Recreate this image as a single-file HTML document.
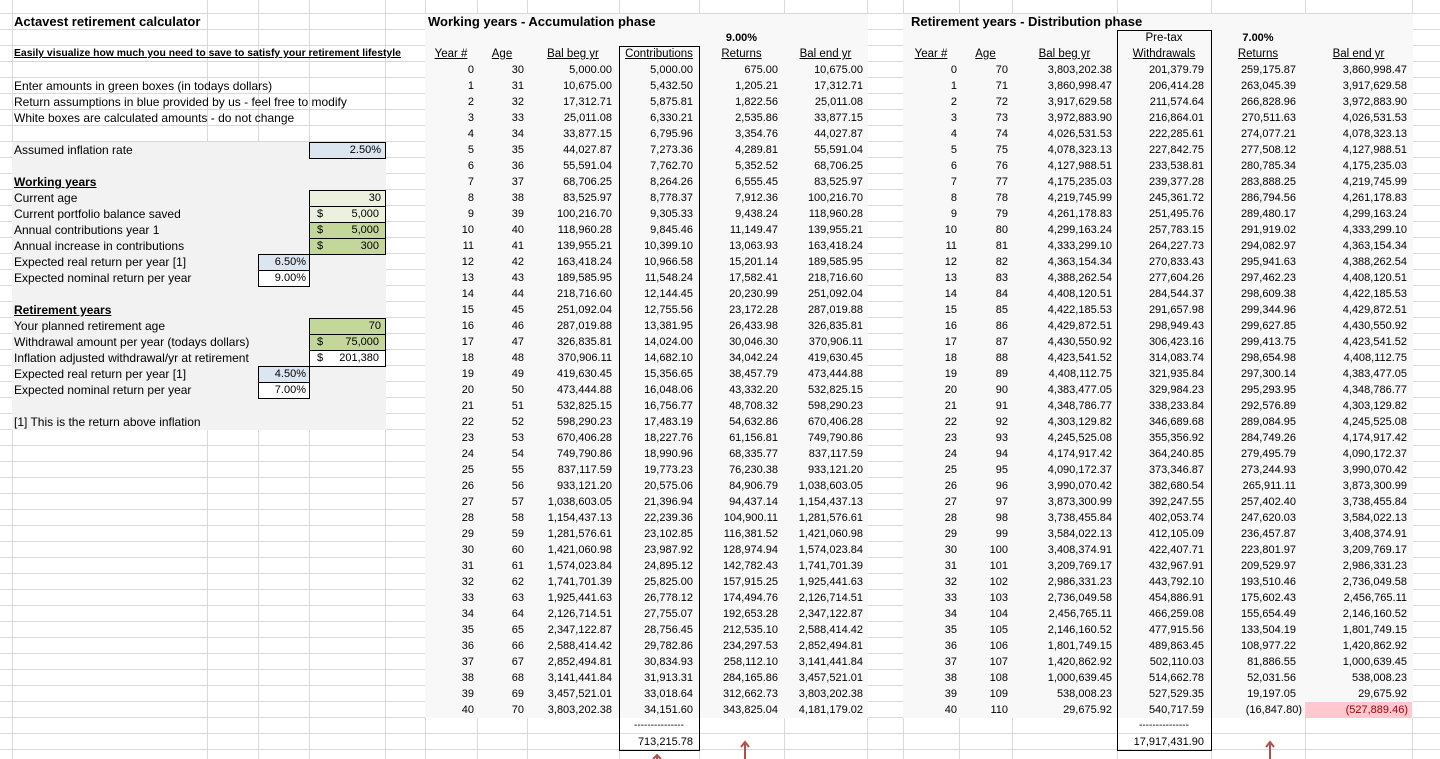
<!DOCTYPE html>
<html><head><meta charset="utf-8"><style>
*{margin:0;padding:0;box-sizing:border-box}
body{width:1440px;height:759px;overflow:hidden;background:#fff;position:relative;font-family:"Liberation Sans",sans-serif;font-size:11px;color:#000;
background-image:repeating-linear-gradient(to bottom,transparent 0,transparent 13px,#d9d9d9 13px,#d9d9d9 14px,transparent 14px,transparent 16px);}
.v{position:absolute;top:0;height:759px;width:1px;background:#d9d9d9}
.g{position:absolute}
.t{position:absolute;white-space:nowrap;line-height:16px;font-size:12px}
.n{font-size:11px}
table{position:absolute;border-collapse:collapse;table-layout:fixed}
td{height:16px;line-height:16px;padding:0;text-align:right;white-space:nowrap;overflow:visible;font-size:11px}
.hd td{text-align:center;text-decoration:underline;font-size:11.5px}
.box{position:absolute;border:1px solid #000}
u{text-decoration:underline}
.m td:nth-child(1){padding-right:3px}.m td:nth-child(2){padding-right:3px}.m td:nth-child(3){padding-right:7px}.m td:nth-child(4){padding-right:6px}.m td:nth-child(5){padding-right:6px}.m td:nth-child(6){padding-right:4px}
.r td:nth-child(1){padding-right:2px}.r td:nth-child(2){padding-right:4px}.r td:nth-child(3){padding-right:5px}.r td:nth-child(4){padding-right:7px}.r td:nth-child(5){padding-right:9px}.r td:nth-child(6){padding-right:5px}
</style></head><body>
<div class="v" style="left:12px"></div><div class="v" style="left:207px"></div><div class="v" style="left:258px"></div><div class="v" style="left:309px"></div><div class="v" style="left:385px"></div><div class="v" style="left:425px"></div><div class="v" style="left:477px"></div><div class="v" style="left:527px"></div><div class="v" style="left:619px"></div><div class="v" style="left:699px"></div><div class="v" style="left:784px"></div><div class="v" style="left:867px"></div><div class="v" style="left:903px"></div><div class="v" style="left:959px"></div><div class="v" style="left:1012px"></div><div class="v" style="left:1117px"></div><div class="v" style="left:1211px"></div><div class="v" style="left:1305px"></div><div class="v" style="left:1412px"></div>

<div class="g" style="left:12px;top:142px;width:374px;height:288px;background:#f2f2f2"></div>
<div class="g" style="left:425px;top:14px;width:443px;height:704px;background:#f8f8f8"></div>
<div class="g" style="left:903px;top:14px;width:510px;height:704px;background:#f8f8f8"></div>

<div class="t" style="left:14px;top:14px;font-weight:bold;font-size:13px">Actavest retirement calculator</div>
<div class="t" style="left:14px;top:46px;font-weight:bold;font-size:10.4px"><u>Easily visualize how much you need to save to satisfy your retirement lifestyle</u></div>
<div class="t" style="left:14px;top:78px">Enter amounts in green boxes (in todays dollars)</div>
<div class="t" style="left:14px;top:94px">Return assumptions in blue provided by us - feel free to modify</div>
<div class="t" style="left:14px;top:110px">White boxes are calculated amounts - do not change</div>
<div class="t" style="left:14px;top:142px">Assumed inflation rate</div>
<div class="t" style="left:14px;top:174px;font-weight:bold"><u>Working years</u></div>
<div class="t" style="left:14px;top:190px">Current age</div>
<div class="t" style="left:14px;top:206px">Current portfolio balance saved</div>
<div class="t" style="left:14px;top:222px">Annual contributions year 1</div>
<div class="t" style="left:14px;top:238px">Annual increase in contributions</div>
<div class="t" style="left:14px;top:254px">Expected real return per year [1]</div>
<div class="t" style="left:14px;top:270px">Expected nominal return per year</div>
<div class="t" style="left:14px;top:302px;font-weight:bold"><u>Retirement years</u></div>
<div class="t" style="left:14px;top:318px">Your planned retirement age</div>
<div class="t" style="left:14px;top:334px">Withdrawal amount per year (todays dollars)</div>
<div class="t" style="left:14px;top:350px">Inflation adjusted withdrawal/yr at retirement</div>
<div class="t" style="left:14px;top:366px">Expected real return per year [1]</div>
<div class="t" style="left:14px;top:382px">Expected nominal return per year</div>
<div class="t" style="left:14px;top:414px">[1] This is the return above inflation</div>

<div class="box n" style="left:309px;top:142px;width:77px;height:17px;background:#dce6f1;text-align:right;padding-right:4px;line-height:15px">2.50%</div>
<div class="box" style="left:309px;top:190px;width:77px;height:65px;background:#c4d79b"></div>
<div class="g" style="left:310px;top:191px;width:75px;height:31px;background:#ebf1de"></div>
<div class="t n" style="left:309px;top:190px;width:76px;text-align:right;padding-right:4px">30</div>
<div class="t n" style="left:317px;top:206px">$</div><div class="t n" style="left:309px;top:206px;width:76px;text-align:right;padding-right:6px">5,000</div>
<div class="t n" style="left:317px;top:222px">$</div><div class="t n" style="left:309px;top:222px;width:76px;text-align:right;padding-right:6px">5,000</div>
<div class="t n" style="left:317px;top:238px">$</div><div class="t n" style="left:309px;top:238px;width:76px;text-align:right;padding-right:6px">300</div>
<div class="g" style="left:309px;top:206px;width:77px;height:1px;background:#000"></div>
<div class="g" style="left:309px;top:222px;width:77px;height:1px;background:#000"></div>
<div class="g" style="left:309px;top:238px;width:77px;height:1px;background:#000"></div>
<div class="box" style="left:258px;top:254px;width:52px;height:33px;background:#fff"></div>
<div class="g" style="left:259px;top:255px;width:50px;height:15px;background:#dce6f1"></div>
<div class="g" style="left:258px;top:270px;width:52px;height:1px;background:#000"></div>
<div class="t n" style="left:258px;top:254px;width:51px;text-align:right;padding-right:3px">6.50%</div>
<div class="t n" style="left:258px;top:270px;width:51px;text-align:right;padding-right:3px">9.00%</div>

<div class="box" style="left:309px;top:318px;width:77px;height:49px;background:#fff"></div>
<div class="g" style="left:310px;top:319px;width:75px;height:31px;background:#c4d79b"></div>
<div class="g" style="left:309px;top:334px;width:77px;height:1px;background:#000"></div>
<div class="g" style="left:309px;top:350px;width:77px;height:1px;background:#000"></div>
<div class="t n" style="left:309px;top:318px;width:76px;text-align:right;padding-right:4px">70</div>
<div class="t n" style="left:317px;top:334px">$</div><div class="t n" style="left:309px;top:334px;width:76px;text-align:right;padding-right:6px">75,000</div>
<div class="t n" style="left:317px;top:350px">$</div><div class="t n" style="left:309px;top:350px;width:76px;text-align:right;padding-right:6px">201,380</div>
<div class="box" style="left:258px;top:366px;width:52px;height:33px;background:#fff"></div>
<div class="g" style="left:259px;top:367px;width:50px;height:15px;background:#dce6f1"></div>
<div class="g" style="left:258px;top:382px;width:52px;height:1px;background:#000"></div>
<div class="t n" style="left:258px;top:366px;width:51px;text-align:right;padding-right:3px">4.50%</div>
<div class="t n" style="left:258px;top:382px;width:51px;text-align:right;padding-right:3px">7.00%</div>

<div class="t" style="left:428px;top:14px;font-weight:bold;font-size:13px">Working years - Accumulation phase</div>
<div class="t n" style="left:699px;top:30px;width:85px;text-align:center;font-weight:bold">9.00%</div>
<div class="box" style="left:619px;top:46px;width:81px;height:705px"></div>
<table class="hd" style="left:425px;top:46px;width:442px"><colgroup><col style="width:52px"><col style="width:50px"><col style="width:92px"><col style="width:80px"><col style="width:85px"><col style="width:83px"></colgroup>
<tr><td>Year #</td><td>Age</td><td>Bal beg yr</td><td>Contributions</td><td>Returns</td><td>Bal end yr</td></tr></table>
<table class="m" style="left:425px;top:62px;width:442px"><colgroup><col style="width:52px"><col style="width:50px"><col style="width:92px"><col style="width:80px"><col style="width:85px"><col style="width:83px"></colgroup>
<tr><td>0</td><td>30</td><td>5,000.00</td><td>5,000.00</td><td>675.00</td><td>10,675.00</td></tr>
<tr><td>1</td><td>31</td><td>10,675.00</td><td>5,432.50</td><td>1,205.21</td><td>17,312.71</td></tr>
<tr><td>2</td><td>32</td><td>17,312.71</td><td>5,875.81</td><td>1,822.56</td><td>25,011.08</td></tr>
<tr><td>3</td><td>33</td><td>25,011.08</td><td>6,330.21</td><td>2,535.86</td><td>33,877.15</td></tr>
<tr><td>4</td><td>34</td><td>33,877.15</td><td>6,795.96</td><td>3,354.76</td><td>44,027.87</td></tr>
<tr><td>5</td><td>35</td><td>44,027.87</td><td>7,273.36</td><td>4,289.81</td><td>55,591.04</td></tr>
<tr><td>6</td><td>36</td><td>55,591.04</td><td>7,762.70</td><td>5,352.52</td><td>68,706.25</td></tr>
<tr><td>7</td><td>37</td><td>68,706.25</td><td>8,264.26</td><td>6,555.45</td><td>83,525.97</td></tr>
<tr><td>8</td><td>38</td><td>83,525.97</td><td>8,778.37</td><td>7,912.36</td><td>100,216.70</td></tr>
<tr><td>9</td><td>39</td><td>100,216.70</td><td>9,305.33</td><td>9,438.24</td><td>118,960.28</td></tr>
<tr><td>10</td><td>40</td><td>118,960.28</td><td>9,845.46</td><td>11,149.47</td><td>139,955.21</td></tr>
<tr><td>11</td><td>41</td><td>139,955.21</td><td>10,399.10</td><td>13,063.93</td><td>163,418.24</td></tr>
<tr><td>12</td><td>42</td><td>163,418.24</td><td>10,966.58</td><td>15,201.14</td><td>189,585.95</td></tr>
<tr><td>13</td><td>43</td><td>189,585.95</td><td>11,548.24</td><td>17,582.41</td><td>218,716.60</td></tr>
<tr><td>14</td><td>44</td><td>218,716.60</td><td>12,144.45</td><td>20,230.99</td><td>251,092.04</td></tr>
<tr><td>15</td><td>45</td><td>251,092.04</td><td>12,755.56</td><td>23,172.28</td><td>287,019.88</td></tr>
<tr><td>16</td><td>46</td><td>287,019.88</td><td>13,381.95</td><td>26,433.98</td><td>326,835.81</td></tr>
<tr><td>17</td><td>47</td><td>326,835.81</td><td>14,024.00</td><td>30,046.30</td><td>370,906.11</td></tr>
<tr><td>18</td><td>48</td><td>370,906.11</td><td>14,682.10</td><td>34,042.24</td><td>419,630.45</td></tr>
<tr><td>19</td><td>49</td><td>419,630.45</td><td>15,356.65</td><td>38,457.79</td><td>473,444.88</td></tr>
<tr><td>20</td><td>50</td><td>473,444.88</td><td>16,048.06</td><td>43,332.20</td><td>532,825.15</td></tr>
<tr><td>21</td><td>51</td><td>532,825.15</td><td>16,756.77</td><td>48,708.32</td><td>598,290.23</td></tr>
<tr><td>22</td><td>52</td><td>598,290.23</td><td>17,483.19</td><td>54,632.86</td><td>670,406.28</td></tr>
<tr><td>23</td><td>53</td><td>670,406.28</td><td>18,227.76</td><td>61,156.81</td><td>749,790.86</td></tr>
<tr><td>24</td><td>54</td><td>749,790.86</td><td>18,990.96</td><td>68,335.77</td><td>837,117.59</td></tr>
<tr><td>25</td><td>55</td><td>837,117.59</td><td>19,773.23</td><td>76,230.38</td><td>933,121.20</td></tr>
<tr><td>26</td><td>56</td><td>933,121.20</td><td>20,575.06</td><td>84,906.79</td><td>1,038,603.05</td></tr>
<tr><td>27</td><td>57</td><td>1,038,603.05</td><td>21,396.94</td><td>94,437.14</td><td>1,154,437.13</td></tr>
<tr><td>28</td><td>58</td><td>1,154,437.13</td><td>22,239.36</td><td>104,900.11</td><td>1,281,576.61</td></tr>
<tr><td>29</td><td>59</td><td>1,281,576.61</td><td>23,102.85</td><td>116,381.52</td><td>1,421,060.98</td></tr>
<tr><td>30</td><td>60</td><td>1,421,060.98</td><td>23,987.92</td><td>128,974.94</td><td>1,574,023.84</td></tr>
<tr><td>31</td><td>61</td><td>1,574,023.84</td><td>24,895.12</td><td>142,782.43</td><td>1,741,701.39</td></tr>
<tr><td>32</td><td>62</td><td>1,741,701.39</td><td>25,825.00</td><td>157,915.25</td><td>1,925,441.63</td></tr>
<tr><td>33</td><td>63</td><td>1,925,441.63</td><td>26,778.12</td><td>174,494.76</td><td>2,126,714.51</td></tr>
<tr><td>34</td><td>64</td><td>2,126,714.51</td><td>27,755.07</td><td>192,653.28</td><td>2,347,122.87</td></tr>
<tr><td>35</td><td>65</td><td>2,347,122.87</td><td>28,756.45</td><td>212,535.10</td><td>2,588,414.42</td></tr>
<tr><td>36</td><td>66</td><td>2,588,414.42</td><td>29,782.86</td><td>234,297.53</td><td>2,852,494.81</td></tr>
<tr><td>37</td><td>67</td><td>2,852,494.81</td><td>30,834.93</td><td>258,112.10</td><td>3,141,441.84</td></tr>
<tr><td>38</td><td>68</td><td>3,141,441.84</td><td>31,913.31</td><td>284,165.86</td><td>3,457,521.01</td></tr>
<tr><td>39</td><td>69</td><td>3,457,521.01</td><td>33,018.64</td><td>312,662.73</td><td>3,803,202.38</td></tr>
<tr><td>40</td><td>70</td><td>3,803,202.38</td><td>34,151.60</td><td>343,825.04</td><td>4,181,179.02</td></tr>
</table>
<div class="t" style="left:619px;top:718px;width:80px;text-align:center;font-size:10px">---------------</div>
<div class="t n" style="left:619px;top:734px;width:74px;text-align:right">713,215.78</div>

<div class="t" style="left:911px;top:14px;font-weight:bold;font-size:13px">Retirement years - Distribution phase</div>
<div class="t n" style="left:1117px;top:30px;width:94px;text-align:center;font-size:11.5px">Pre-tax</div>
<div class="t n" style="left:1211px;top:30px;width:94px;text-align:center;font-weight:bold">7.00%</div>
<div class="box" style="left:1117px;top:30px;width:95px;height:721px"></div>
<table class="hd" style="left:903px;top:46px;width:509px"><colgroup><col style="width:56px"><col style="width:53px"><col style="width:105px"><col style="width:94px"><col style="width:94px"><col style="width:107px"></colgroup>
<tr><td>Year #</td><td>Age</td><td>Bal beg yr</td><td>Withdrawals</td><td>Returns</td><td>Bal end yr</td></tr></table>
<div class="g" style="left:1305px;top:702px;width:107px;height:16px;background:#ffc7ce"></div>
<table class="r" style="left:903px;top:62px;width:509px"><colgroup><col style="width:56px"><col style="width:53px"><col style="width:105px"><col style="width:94px"><col style="width:94px"><col style="width:107px"></colgroup>
<tr><td>0</td><td>70</td><td>3,803,202.38</td><td>201,379.79</td><td>259,175.87</td><td>3,860,998.47</td></tr>
<tr><td>1</td><td>71</td><td>3,860,998.47</td><td>206,414.28</td><td>263,045.39</td><td>3,917,629.58</td></tr>
<tr><td>2</td><td>72</td><td>3,917,629.58</td><td>211,574.64</td><td>266,828.96</td><td>3,972,883.90</td></tr>
<tr><td>3</td><td>73</td><td>3,972,883.90</td><td>216,864.01</td><td>270,511.63</td><td>4,026,531.53</td></tr>
<tr><td>4</td><td>74</td><td>4,026,531.53</td><td>222,285.61</td><td>274,077.21</td><td>4,078,323.13</td></tr>
<tr><td>5</td><td>75</td><td>4,078,323.13</td><td>227,842.75</td><td>277,508.12</td><td>4,127,988.51</td></tr>
<tr><td>6</td><td>76</td><td>4,127,988.51</td><td>233,538.81</td><td>280,785.34</td><td>4,175,235.03</td></tr>
<tr><td>7</td><td>77</td><td>4,175,235.03</td><td>239,377.28</td><td>283,888.25</td><td>4,219,745.99</td></tr>
<tr><td>8</td><td>78</td><td>4,219,745.99</td><td>245,361.72</td><td>286,794.56</td><td>4,261,178.83</td></tr>
<tr><td>9</td><td>79</td><td>4,261,178.83</td><td>251,495.76</td><td>289,480.17</td><td>4,299,163.24</td></tr>
<tr><td>10</td><td>80</td><td>4,299,163.24</td><td>257,783.15</td><td>291,919.02</td><td>4,333,299.10</td></tr>
<tr><td>11</td><td>81</td><td>4,333,299.10</td><td>264,227.73</td><td>294,082.97</td><td>4,363,154.34</td></tr>
<tr><td>12</td><td>82</td><td>4,363,154.34</td><td>270,833.43</td><td>295,941.63</td><td>4,388,262.54</td></tr>
<tr><td>13</td><td>83</td><td>4,388,262.54</td><td>277,604.26</td><td>297,462.23</td><td>4,408,120.51</td></tr>
<tr><td>14</td><td>84</td><td>4,408,120.51</td><td>284,544.37</td><td>298,609.38</td><td>4,422,185.53</td></tr>
<tr><td>15</td><td>85</td><td>4,422,185.53</td><td>291,657.98</td><td>299,344.96</td><td>4,429,872.51</td></tr>
<tr><td>16</td><td>86</td><td>4,429,872.51</td><td>298,949.43</td><td>299,627.85</td><td>4,430,550.92</td></tr>
<tr><td>17</td><td>87</td><td>4,430,550.92</td><td>306,423.16</td><td>299,413.75</td><td>4,423,541.52</td></tr>
<tr><td>18</td><td>88</td><td>4,423,541.52</td><td>314,083.74</td><td>298,654.98</td><td>4,408,112.75</td></tr>
<tr><td>19</td><td>89</td><td>4,408,112.75</td><td>321,935.84</td><td>297,300.14</td><td>4,383,477.05</td></tr>
<tr><td>20</td><td>90</td><td>4,383,477.05</td><td>329,984.23</td><td>295,293.95</td><td>4,348,786.77</td></tr>
<tr><td>21</td><td>91</td><td>4,348,786.77</td><td>338,233.84</td><td>292,576.89</td><td>4,303,129.82</td></tr>
<tr><td>22</td><td>92</td><td>4,303,129.82</td><td>346,689.68</td><td>289,084.95</td><td>4,245,525.08</td></tr>
<tr><td>23</td><td>93</td><td>4,245,525.08</td><td>355,356.92</td><td>284,749.26</td><td>4,174,917.42</td></tr>
<tr><td>24</td><td>94</td><td>4,174,917.42</td><td>364,240.85</td><td>279,495.79</td><td>4,090,172.37</td></tr>
<tr><td>25</td><td>95</td><td>4,090,172.37</td><td>373,346.87</td><td>273,244.93</td><td>3,990,070.42</td></tr>
<tr><td>26</td><td>96</td><td>3,990,070.42</td><td>382,680.54</td><td>265,911.11</td><td>3,873,300.99</td></tr>
<tr><td>27</td><td>97</td><td>3,873,300.99</td><td>392,247.55</td><td>257,402.40</td><td>3,738,455.84</td></tr>
<tr><td>28</td><td>98</td><td>3,738,455.84</td><td>402,053.74</td><td>247,620.03</td><td>3,584,022.13</td></tr>
<tr><td>29</td><td>99</td><td>3,584,022.13</td><td>412,105.09</td><td>236,457.87</td><td>3,408,374.91</td></tr>
<tr><td>30</td><td>100</td><td>3,408,374.91</td><td>422,407.71</td><td>223,801.97</td><td>3,209,769.17</td></tr>
<tr><td>31</td><td>101</td><td>3,209,769.17</td><td>432,967.91</td><td>209,529.97</td><td>2,986,331.23</td></tr>
<tr><td>32</td><td>102</td><td>2,986,331.23</td><td>443,792.10</td><td>193,510.46</td><td>2,736,049.58</td></tr>
<tr><td>33</td><td>103</td><td>2,736,049.58</td><td>454,886.91</td><td>175,602.43</td><td>2,456,765.11</td></tr>
<tr><td>34</td><td>104</td><td>2,456,765.11</td><td>466,259.08</td><td>155,654.49</td><td>2,146,160.52</td></tr>
<tr><td>35</td><td>105</td><td>2,146,160.52</td><td>477,915.56</td><td>133,504.19</td><td>1,801,749.15</td></tr>
<tr><td>36</td><td>106</td><td>1,801,749.15</td><td>489,863.45</td><td>108,977.22</td><td>1,420,862.92</td></tr>
<tr><td>37</td><td>107</td><td>1,420,862.92</td><td>502,110.03</td><td>81,886.55</td><td>1,000,639.45</td></tr>
<tr><td>38</td><td>108</td><td>1,000,639.45</td><td>514,662.78</td><td>52,031.56</td><td>538,008.23</td></tr>
<tr><td>39</td><td>109</td><td>538,008.23</td><td>527,529.35</td><td>19,197.05</td><td>29,675.92</td></tr>
<tr><td>40</td><td>110</td><td>29,675.92</td><td>540,717.59</td><td style="padding-right:3px">(16,847.80)</td><td style="color:#9c0006;padding-right:4px">(527,889.46)</td></tr>
</table>
<div class="t" style="left:1117px;top:718px;width:94px;text-align:center;font-size:10px">---------------</div>
<div class="t n" style="left:1117px;top:734px;width:87px;text-align:right">17,917,431.90</div>

<svg style="position:absolute;left:0;top:0" width="1440" height="759">
<g stroke="#b0504c" stroke-width="2" fill="none">
<path d="M745 743V759M741 747L745 742L749 747"/>
<path d="M1270 743V759M1266 747L1270 742L1274 747"/>
<path d="M657 756V759M653 759L657 755L661 759"/>
</g></svg>
</body></html>
